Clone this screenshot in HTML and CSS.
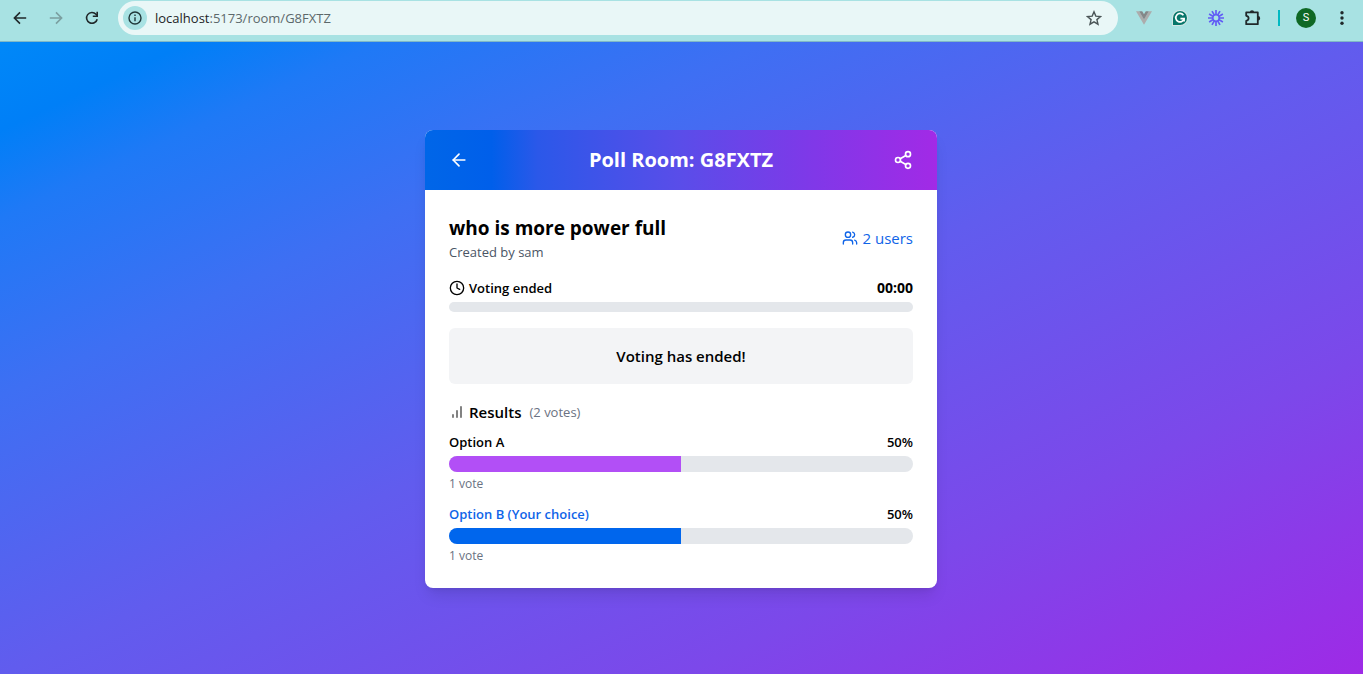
FILE: index.html
```html
<!DOCTYPE html>
<html lang="en">
<head>
<meta charset="utf-8">
<meta name="viewport" content="width=device-width, initial-scale=1">
<title>Poll Room: G8FXTZ</title>
<link rel="stylesheet" href="styles.css">
</head>
<body>
<header class="toolbar">
  <nav class="tools" aria-label="Navigation">
    <button class="tool" aria-label="Back">
      <svg width="16" height="16" viewBox="0 0 16 16" fill="none" stroke="#20282a" stroke-width="1.6"><path d="M14.2 8H3M8 2.4 2.4 8 8 13.6"/></svg>
    </button>
    <button class="tool" aria-label="Forward" disabled>
      <svg width="16" height="16" viewBox="0 0 16 16" fill="none" stroke="#7b9fa0" stroke-width="1.6"><path d="M1.8 8H13M8 2.4 13.6 8 8 13.6"/></svg>
    </button>
    <button class="tool" aria-label="Reload">
      <svg width="16" height="16" viewBox="0 0 16 16" fill="none" stroke="#20282a" stroke-width="1.6"><path d="M13.2 9.2A5.4 5.4 0 1 1 12 4.3L13 5.4"/><path d="M13.2 1.8V6.2H8.8" /></svg>
    </button>
  </nav>
  <div class="omnibox">
    <button class="site-info" aria-label="View site information">
      <svg width="14" height="14" viewBox="0 0 14 14" fill="none" stroke="#20383a" stroke-width="1.4"><circle cx="7" cy="7" r="6"/><path d="M7 6.2v4M7 3.6v1.5"/></svg>
    </button>
    <div class="url" role="textbox" aria-label="Address" contenteditable="true" spellcheck="false"><span class="url-host">localhost</span>:5173/room/G8FXTZ</div>
    <button class="tool" aria-label="Bookmark this tab">
      <svg width="16" height="16" viewBox="0 0 16 16" fill="none" stroke="#4b5557" stroke-width="1.4"><path d="m8 1.8 1.8 4.3 4.7.4-3.6 3.1 1.1 4.6L8 11.8l-4 2.4 1.1-4.6-3.6-3.1 4.7-.4z"/></svg>
    </button>
  </div>
  <div class="tools">
    <button class="tool" aria-label="Vue.js devtools">
      <svg width="16" height="16" viewBox="0 0 16 16"><path fill="#acacac" d="M0 1.2h3.2L8 9.4l4.8-8.2H16L8 14.8z"/><path fill="#858788" d="M3.2 1.2h3L8 4.2l1.8-3h3L8 9.4z"/></svg>
    </button>
    <button class="tool" aria-label="Grammarly">
      <svg width="16" height="16" viewBox="0 0 16 16"><path fill="#d3e5e3" d="M0 16V8a8 8 0 1 1 8 8z"/><path fill="#08766a" d="M1 15V8a7 7 0 1 1 7 7z"/><path fill="none" stroke="#fff" stroke-width="1.7" d="M11.4 5.2A4.2 4.2 0 1 0 12.1 8.6H8.4M12.1 8.4v3"/></svg>
    </button>
    <button class="tool" aria-label="Loom">
      <svg width="16" height="16" viewBox="0 0 16 16" stroke="#625df5" stroke-width="1.7" fill="none"><circle cx="8" cy="8" r="3.3"/><path d="M8 0v4.4M8 11.6V16M0 8h4.4M11.6 8H16M4 1.1l2.2 3.8M9.8 11.1l2.2 3.8M1.1 4l3.8 2.2M11.1 9.8l3.8 2.2M1.1 12l3.8-2.2M11.1 6.2 14.9 4M4 14.9l2.2-3.8M9.8 4.9 12 1.1"/></svg>
    </button>
    <button class="tool" aria-label="Extensions">
      <svg width="18" height="18" viewBox="0 0 18 18"><path fill="none" stroke="#20282a" stroke-width="1.8" stroke-linejoin="round" d="M3.2 3.4h11.6v11.8H3.2v-3.4c3.2-.4 3.2-4.6 0-5z"/><path fill="#20282a" d="M6.8 3.4a2.2 2.2 0 0 1 4.4 0zM15 7a2.2 2.2 0 0 1 0 4.4z"/></svg>
    </button>
  </div>
  <div class="divider"></div>
  <div class="tools">
    <button class="tool" aria-label="Profile"><span class="avatar">S</span></button>
    <button class="tool" aria-label="Menu">
      <svg width="16" height="16" viewBox="0 0 16 16" fill="#20282a"><circle cx="8" cy="2.8" r="1.7"/><circle cx="8" cy="8" r="1.7"/><circle cx="8" cy="13.2" r="1.7"/></svg>
    </button>
  </div>
</header>

<main class="page">
  <section class="card">
    <div class="card-head">
      <button class="head-btn" aria-label="Leave room">
        <svg class="lucide" width="20" height="20" viewBox="0 0 24 24"><path d="m12 19-7-7 7-7"/><path d="M19 12H5"/></svg>
      </button>
      <h1 class="card-title">Poll Room: G8FXTZ</h1>
      <button class="head-btn" aria-label="Share room">
        <svg class="lucide" width="20" height="20" viewBox="0 0 24 24"><circle cx="18" cy="5" r="3"/><circle cx="6" cy="12" r="3"/><circle cx="18" cy="19" r="3"/><path d="m8.6 13.5 6.8 4M15.4 6.5l-6.8 4"/></svg>
      </button>
    </div>
    <div class="card-body">
      <div class="row">
        <div>
          <h2 class="question">who is more power full</h2>
          <p class="author">Created by sam</p>
        </div>
        <div class="users">
          <svg class="lucide" width="16" height="16" viewBox="0 0 24 24"><path d="M16 21v-2a4 4 0 0 0-4-4H6a4 4 0 0 0-4 4v2"/><circle cx="9" cy="7" r="4"/><path d="M22 21v-2a4 4 0 0 0-3-3.87M16 3.13a4 4 0 0 1 0 7.75"/></svg>
          <span>2 users</span>
        </div>
      </div>

      <div class="timer">
        <div class="row">
          <span class="timer-label">
            <svg class="lucide" width="16" height="16" viewBox="0 0 24 24"><circle cx="12" cy="12" r="10"/><path d="M12 6v6l4 2"/></svg>
            Voting ended
          </span>
          <span class="timer-value">00:00</span>
        </div>
        <div class="track track-thin" role="progressbar" aria-label="Time left" aria-valuenow="0"></div>
      </div>

      <p class="notice">Voting has ended!</p>

      <div class="results">
        <div class="results-head">
          <svg class="lucide chart" width="16" height="16" viewBox="0 0 24 24"><path d="M18 20V4M12 20v-10M6 20v-4"/></svg>
          <h3 class="results-title">Results</h3>
          <span class="results-count">(2 votes)</span>
        </div>
        <div class="option">
          <div class="row option-row"><span>Option A</span><span>50%</span></div>
          <div class="track" role="progressbar" aria-label="Option A" aria-valuenow="50"><div class="fill" style="width: 50%"></div></div>
          <p class="votes">1 vote</p>
        </div>
        <div class="option">
          <div class="row option-row"><span class="chosen">Option B (Your choice)</span><span>50%</span></div>
          <div class="track" role="progressbar" aria-label="Option B" aria-valuenow="50"><div class="fill fill-chosen" style="width: 50%"></div></div>
          <p class="votes">1 vote</p>
        </div>
      </div>
    </div>
  </section>
</main>
</body>
</html>
```
FILE: styles.css
```css
* { box-sizing: border-box; margin: 0; padding: 0; }

body {
  min-height: 100vh;
  display: flex;
  flex-direction: column;
  font-family: "Segoe UI", "Open Sans", "Noto Sans", sans-serif;
  font-size: 16px;
  line-height: 24px;
  color: #000;
}

button { border: 0; background: none; font: inherit; color: inherit; cursor: pointer; }
svg { display: block; flex: none; }

/* Browser toolbar */
.toolbar {
  display: flex;
  align-items: center;
  padding: 1px 5px 6px 4px;
  background: #a8e2e3;
  border-bottom: 1px solid #80b8c6;
}
.tools { display: flex; gap: 4px; }
.tool {
  width: 32px;
  height: 32px;
  display: flex;
  align-items: center;
  justify-content: center;
}
.omnibox {
  flex: 1;
  display: flex;
  align-items: center;
  height: 34px;
  margin: 0 10px;
  padding: 0 8px 0 5px;
  border-radius: 17px;
  background: #e9f7f7;
}
.site-info {
  width: 24px;
  height: 24px;
  display: flex;
  align-items: center;
  justify-content: center;
  border-radius: 50%;
  background: #a8e2e3;
}
.url {
  flex: 1;
  padding-left: 8px;
  font-size: 13px;
  line-height: 20px;
  color: #5c686b;
  white-space: nowrap;
  outline: 0;
}
.url-host { color: #1d2426; }
.divider { width: 2px; height: 16px; margin: 0 10px; background: #00b9c2; }
.avatar {
  width: 20px;
  height: 20px;
  border-radius: 50%;
  background: #0f6825;
  color: #fff;
  font-family: Roboto, sans-serif;
  font-size: 11px;
  line-height: 20px;
  text-align: center;
}

/* Page */
.page {
  flex: 1;
  display: flex;
  align-items: center;
  justify-content: center;
  padding: 18px 17px 16px 16px;
  background: linear-gradient(to bottom right, #0088f8 0%, #007ff7 7%, #1f79f6 14%, #3e6ff3 28%, #615cee 50%, #7c48ea 75%, #9e2ae6 100%);
}
.card {
  width: 100%;
  max-width: 512px;
  border-radius: 8px;
  overflow: hidden;
  background: #fff;
  box-shadow: 0 10px 15px -3px rgb(0 0 0 / 0.1), 0 4px 6px -4px rgb(0 0 0 / 0.1);
}
.lucide {
  fill: none;
  stroke: currentColor;
  stroke-width: 2;
  stroke-linecap: round;
  stroke-linejoin: round;
}
.card-head {
  display: flex;
  align-items: center;
  justify-content: space-between;
  padding: 16px 24px;
  color: #fff;
  background: linear-gradient(to right, #0066e8 0%, #005fea 13%, #2b58e9 22%, #5a4de9 50%, #8038e8 76%, #a22ae6 100%);
}
.head-btn { display: flex; }
.card-title { font-size: 20px; line-height: 28px; font-weight: 700; }
.card-body { display: flex; flex-direction: column; gap: 16px; padding: 24px; }
.row { display: flex; align-items: center; justify-content: space-between; }
.question { font-size: 19px; line-height: 28px; font-weight: 700; }
.author { font-size: 13px; line-height: 20px; color: #4a5565; }
.users { display: flex; align-items: center; gap: 4px; font-size: 15px; color: #0f64e8; }
.timer { display: grid; gap: 4px; font-size: 14px; line-height: 20px; }
.timer-label { display: flex; align-items: center; gap: 4px; font-size: 13px; font-weight: 600; }
.timer-value { font-weight: 700; }
.track { height: 16px; border-radius: 8px; overflow: hidden; background: #e4e7eb; }
.track-thin { height: 10px; }
.notice {
  padding: 16px;
  border-radius: 6px;
  background: #f3f4f6;
  text-align: center;
  font-size: 15px;
  font-weight: 600;
}
.results { display: grid; gap: 8px; }
.results-head { display: flex; align-items: center; gap: 4px; }
.chart { color: #444; }
.results-title { font-size: 15px; line-height: 24px; font-weight: 600; }
.results-count { margin-left: 4px; font-size: 13px; line-height: 20px; color: #6a7282; }
.option { display: grid; gap: 4px; }
.option + .option { margin-top: 4px; }
.option-row { font-size: 13px; line-height: 20px; font-weight: 600; }
.chosen { color: #0f64e8; }
.fill { height: 100%; background: #b24ff6; }
.fill-chosen { background: #0066ed; }
.votes { font-size: 12px; line-height: 16px; color: #6a7282; }
```
